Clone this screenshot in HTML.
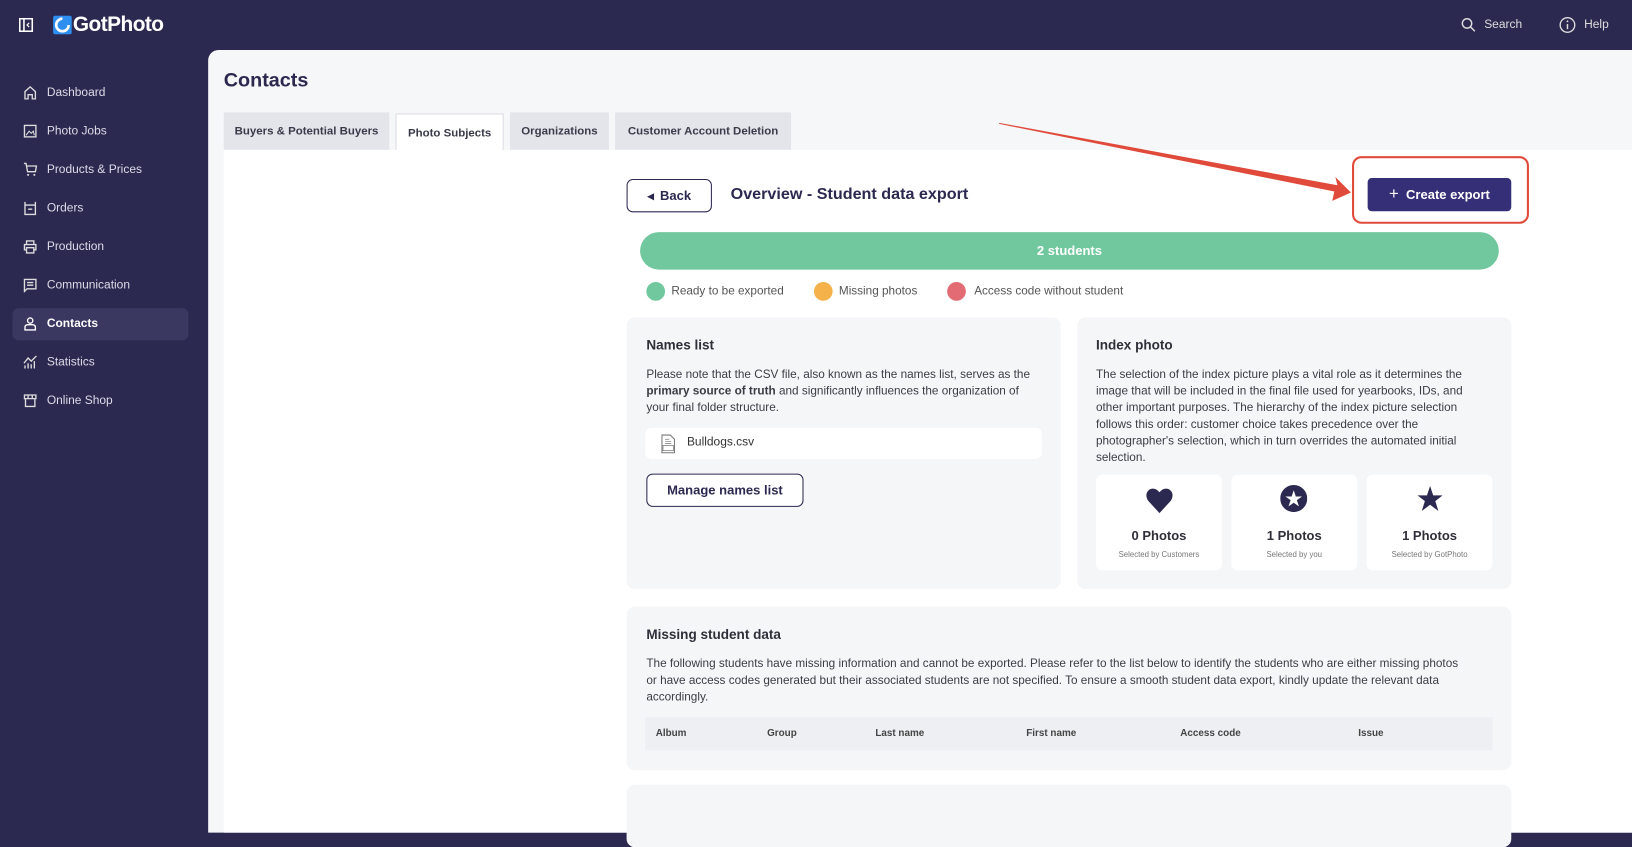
<!DOCTYPE html>
<html><head><meta charset="utf-8"><style>
*{box-sizing:border-box;margin:0;padding:0}
html,body{width:1632px;height:800px;overflow:hidden;background:#2c2950;font-family:"Liberation Sans",sans-serif}
#w{position:absolute;left:0;top:0;width:1568px;height:800px;transform:scale(1.040816);transform-origin:0 0;background:#2c2950}
.a{position:absolute}
.nav{position:absolute;left:45px;font-size:11.5px;color:#dcdbe8;transform:translateY(-50%)}
.ic{position:absolute;left:22px;width:14px;height:14px;transform:translateY(-50%)}
.tab{position:absolute;top:108px;height:36px;background:#e3e5ea;font-size:11px;font-weight:bold;color:#3a3a4a;display:flex;align-items:center;justify-content:center}
.card{position:absolute;background:#f5f6f8;border-radius:8px}
.h{font-size:13px;font-weight:bold;color:#2f2f3a}
.p{font-size:11.3px;line-height:16px;color:#3c3c46;white-space:nowrap}
.leg{position:absolute;top:271px;width:18px;height:18px;border-radius:50%}
.lt{position:absolute;top:274px;font-size:11.3px;color:#555}
.sub{position:absolute;top:456px;width:121px;height:92px;background:#fff;border-radius:6px;text-align:center}
.sub b{position:absolute;top:52px;left:0;right:0;font-size:12.5px;color:#2f2f3a}
.sub i{position:absolute;top:72px;left:0;right:0;font-size:7.5px;color:#777;font-style:normal}
.th{position:absolute;top:699px;font-size:9.5px;font-weight:bold;color:#444}
</style></head><body><div id="w">
<svg class="a" style="left:18px;top:17px" width="14" height="14" viewBox="0 0 14 14"><rect x="1" y="1" width="12" height="12" fill="none" stroke="#fff" stroke-width="1.5"/><line x1="5" y1="1" x2="5" y2="13" stroke="#fff" stroke-width="1.5"/><path d="M10 5L8 7L10 9" fill="none" stroke="#fff" stroke-width="1.2"/></svg>
<svg class="a" style="left:51px;top:15px" width="18" height="18" viewBox="0 0 18 18"><rect width="18" height="18" rx="2" fill="#2e8ff0"/><path d="M9 3a6 6 0 1 0 6 6" fill="none" stroke="#fff" stroke-width="2.5"/></svg>
<div class="a" style="left:70px;top:13px;font-size:20px;font-weight:bold;color:#fff;letter-spacing:-0.5px">GotPhoto</div>
<svg class="a" style="left:1404px;top:17px" width="14" height="14" viewBox="0 0 14 14"><circle cx="5.5" cy="5.5" r="4.5" fill="none" stroke="#ddd" stroke-width="1.4"/><line x1="9" y1="9" x2="13" y2="13" stroke="#ddd" stroke-width="1.4"/></svg>
<div class="a" style="left:1426px;top:18px;font-size:11.5px;color:#ddd">Search</div>
<svg class="a" style="left:1498px;top:16px" width="16" height="16" viewBox="0 0 16 16"><circle cx="8" cy="8" r="7" fill="none" stroke="#ddd" stroke-width="1.3"/><line x1="8" y1="7" x2="8" y2="12" stroke="#ddd" stroke-width="1.4"/><circle cx="8" cy="4.5" r="0.9" fill="#ddd"/></svg>
<div class="a" style="left:1522px;top:18px;font-size:11.5px;color:#ddd">Help</div>
<div class="a" style="left:12px;top:296px;width:169px;height:31px;background:#3a3760;border-radius:6px"></div>
<svg class="ic" style="top:89px" viewBox="0 0 14 14"><path d="M2 13V6L7 1.5L12 6V13H9V9H5V13Z" fill="none" stroke="#ddd" stroke-width="1.3"/></svg><div class="nav" style="top:89px">Dashboard</div>
<svg class="ic" style="top:126px" viewBox="0 0 14 14"><rect x="1.5" y="1.5" width="11" height="11" fill="none" stroke="#ddd" stroke-width="1.3"/><path d="M3 11L6 7L8 9L10 7L11 11" fill="none" stroke="#ddd"/></svg><div class="nav" style="top:126px">Photo Jobs</div>
<svg class="ic" style="top:163px" viewBox="0 0 14 14"><path d="M1 1H3L4.5 9H12L13 3.5H4" fill="none" stroke="#ddd" stroke-width="1.3"/><circle cx="5" cy="12" r="1" fill="#ddd"/><circle cx="11" cy="12" r="1" fill="#ddd"/></svg><div class="nav" style="top:163px">Products &amp; Prices</div>
<svg class="ic" style="top:200px" viewBox="0 0 14 14"><path d="M2 1V13H12V1M2 4H12M5 8H9" fill="none" stroke="#ddd" stroke-width="1.3"/></svg><div class="nav" style="top:200px">Orders</div>
<svg class="ic" style="top:237px" viewBox="0 0 14 14"><path d="M3.5 5V1.5H10.5V5M3.5 10H1.5V5H12.5V10H10.5M3.5 8H10.5V13H3.5Z" fill="none" stroke="#ddd" stroke-width="1.3"/></svg><div class="nav" style="top:237px">Production</div>
<svg class="ic" style="top:274px" viewBox="0 0 14 14"><path d="M1.5 1.5H12.5V10.5H4L1.5 13Z M4 4.5H10M4 7H10" fill="none" stroke="#ddd" stroke-width="1.3"/></svg><div class="nav" style="top:274px">Communication</div>
<svg class="ic" style="top:311px" viewBox="0 0 14 14"><circle cx="7" cy="4" r="2.5" fill="none" stroke="#fff" stroke-width="1.3"/><path d="M2 13V10.5Q2 8 5 8H9Q12 8 12 10.5V13Z" fill="none" stroke="#fff" stroke-width="1.3"/></svg><div class="nav" style="top:311px;color:#fff;font-weight:bold">Contacts</div>
<svg class="ic" style="top:348px" viewBox="0 0 14 14"><path d="M1 8L5 3L8 6L13 1M2 13V10M5 13V8M8 13V9M11 13V6" fill="none" stroke="#ddd" stroke-width="1.3"/></svg><div class="nav" style="top:348px">Statistics</div>
<svg class="ic" style="top:385px" viewBox="0 0 14 14"><path d="M1.5 1.5H12.5V5H1.5ZM2.5 5V12.5H11.5V5M5 1.5V5M9 1.5V5" fill="none" stroke="#ddd" stroke-width="1.3"/></svg><div class="nav" style="top:385px">Online Shop</div>
<div class="a" style="left:200px;top:48px;width:1368px;height:752px;background:#f6f7f9;border-top-left-radius:10px"></div>
<div class="a" style="left:215px;top:67px;font-size:19px;font-weight:bold;color:#2c2950">Contacts</div>
<div class="tab" style="left:215px;width:159px">Buyers &amp; Potential Buyers</div>
<div class="tab" style="left:380px;width:104px;background:#fff;border:1px solid #dcdde3;border-bottom:none;top:109px;height:36px">Photo Subjects</div>
<div class="tab" style="left:490px;width:95px">Organizations</div>
<div class="tab" style="left:591px;width:169px">Customer Account Deletion</div>
<div class="a" style="left:215px;top:144px;width:1353px;height:656px;background:#fff"></div>
<div class="a" style="left:602px;top:172px;width:82px;height:32px;border:1.5px solid #2c2950;border-radius:6px;font-size:12.5px;font-weight:bold;color:#2c2950;display:flex;align-items:center;justify-content:center"><span style="font-size:8px;margin-right:6px">◀</span>Back</div>
<div class="a" style="left:702px;top:178px;font-size:15.5px;font-weight:bold;color:#2c2950">Overview - Student data export</div>
<div class="a" style="left:1314px;top:171px;width:138px;height:32px;background:#352f78;border-radius:4px;color:#fff;font-size:12.5px;font-weight:bold;display:flex;align-items:center;justify-content:center"><span style="font-size:16px;font-weight:normal;margin-right:7px">+</span>Create export</div>
<div class="a" style="left:1299px;top:150px;width:170px;height:65px;border:2.5px solid #e04a3a;border-radius:9px"></div>
<svg class="a" style="left:0;top:0" width="1568" height="300"><polygon points="960,118 1285,178 1283,170 1298,185 1280,193 1282,184 960,119" fill="#e04a3a"/></svg>
<div class="a" style="left:615px;top:223px;width:825px;height:36px;background:#72c89e;border-radius:18px;color:#fff;font-size:12.5px;font-weight:bold;display:flex;align-items:center;justify-content:center">2 students</div>
<div class="leg" style="left:621px;background:#72c89e"></div><div class="lt" style="left:645px">Ready to be exported</div>
<div class="leg" style="left:782px;background:#f6b24a"></div><div class="lt" style="left:806px">Missing photos</div>
<div class="leg" style="left:910px;background:#e36b74"></div><div class="lt" style="left:936px">Access code without student</div>
<div class="card" style="left:602px;top:305px;width:417px;height:261px"></div>
<div class="a h" style="left:621px;top:324px">Names list</div>
<div class="a p" style="left:621px;top:352px">Please note that the CSV file, also known as the names list, serves as the<br><b>primary source of truth</b> and significantly influences the organization of<br>your final folder structure.</div>
<div class="a" style="left:620px;top:411px;width:381px;height:30px;background:#fff;border-radius:6px"></div>
<svg class="a" style="left:634px;top:417px" width="16" height="19" viewBox="0 0 16 19"><path d="M2 1H10L14 5V18H2Z" fill="none" stroke="#777"/><rect x="3" y="11" width="10" height="5" fill="none" stroke="#777" stroke-width=".7"/><path d="M5 5H9M5 7H11M5 9H11" stroke="#777" stroke-width=".7"/></svg>
<div class="a" style="left:660px;top:419px;font-size:11.5px;color:#333">Bulldogs.csv</div>
<div class="a" style="left:621px;top:455px;width:151px;height:32px;border:1.5px solid #2c2950;border-radius:6px;background:#fff;font-size:12.5px;font-weight:bold;color:#2c2950;display:flex;align-items:center;justify-content:center">Manage names list</div>
<div class="card" style="left:1035px;top:305px;width:417px;height:261px"></div>
<div class="a h" style="left:1053px;top:324px">Index photo</div>
<div class="a p" style="left:1053px;top:352px">The selection of the index picture plays a vital role as it determines the<br>image that will be included in the final file used for yearbooks, IDs, and<br>other important purposes. The hierarchy of the index picture selection<br>follows this order: customer choice takes precedence over the<br>photographer's selection, which in turn overrides the automated initial<br>selection.</div>
<div class="sub" style="left:1053px"><svg class="a" style="left:47px;top:12px" width="28" height="26" viewBox="0 0 28 26"><path d="M14 25L3 13Q-1 6 5 2Q10 0 14 5Q18 0 23 2Q29 6 25 13Z" fill="#2c2950"/></svg><b>0 Photos</b><i>Selected by Customers</i></div>
<div class="sub" style="left:1183px"><svg class="a" style="left:47px;top:10px" width="26" height="26" viewBox="0 0 26 26"><circle cx="13" cy="13" r="13" fill="#2c2950"/><polygon points="13,5 15,11 21,11 16,14.5 18,20.5 13,17 8,20.5 10,14.5 5,11 11,11" fill="#fff"/></svg><b>1 Photos</b><i>Selected by you</i></div>
<div class="sub" style="left:1313px"><svg class="a" style="left:48px;top:10px" width="26" height="26" viewBox="0 0 26 26"><polygon points="13,1 16,10 25,10 18,15.5 21,25 13,19 5,25 8,15.5 1,10 10,10" fill="#2c2950"/></svg><b>1 Photos</b><i>Selected by GotPhoto</i></div>
<div class="card" style="left:602px;top:583px;width:850px;height:157px"></div>
<div class="a h" style="left:621px;top:602px">Missing student data</div>
<div class="a p" style="left:621px;top:630px">The following students have missing information and cannot be exported. Please refer to the list below to identify the students who are either missing photos<br>or have access codes generated but their associated students are not specified. To ensure a smooth student data export, kindly update the relevant data<br>accordingly.</div>
<div class="a" style="left:620px;top:689px;width:814px;height:32px;background:#eeeff2"></div>
<div class="th" style="left:630px">Album</div><div class="th" style="left:737px">Group</div><div class="th" style="left:841px">Last name</div><div class="th" style="left:986px">First name</div><div class="th" style="left:1134px">Access code</div><div class="th" style="left:1305px">Issue</div>
<div class="card" style="left:602px;top:754px;width:850px;height:60px"></div>
</div></body></html>
